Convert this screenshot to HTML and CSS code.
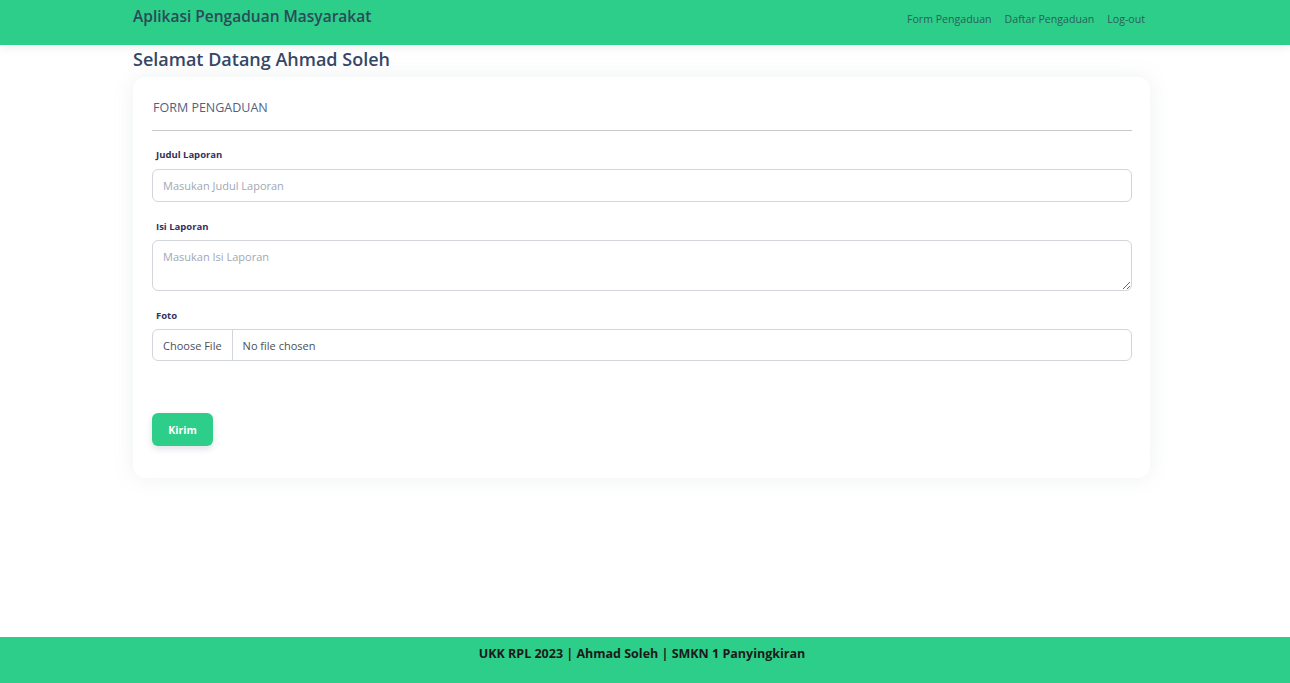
FILE: index.html
```html
<!DOCTYPE html>
<html lang="id">
<head>
<meta charset="utf-8">
<title>Aplikasi Pengaduan Masyarakat</title>
<link rel="stylesheet" href="styles.css">
</head>
<body>
<div class="page">
  <nav class="navbar">
    <div class="container nav-inner">
      <a class="brand" href="#">Aplikasi Pengaduan Masyarakat</a>
      <ul class="nav-links">
        <li><a href="#">Form Pengaduan</a></li>
        <li><a href="#">Daftar Pengaduan</a></li>
        <li><a href="#">Log-out</a></li>
      </ul>
    </div>
  </nav>
  <main class="container main">
    <h1 class="welcome">Selamat Datang Ahmad Soleh</h1>
    <section class="card">
      <div class="card-title">FORM PENGADUAN</div>
      <hr class="divider">
      <form class="form">
        <div class="group">
          <label class="label">Judul Laporan</label>
          <input class="control" type="text" placeholder="Masukan Judul Laporan">
        </div>
        <div class="group">
          <label class="label">Isi Laporan</label>
          <textarea class="control area" placeholder="Masukan Isi Laporan"></textarea>
        </div>
        <div class="group">
          <label class="label">Foto</label>
          <div class="control file">
            <span class="file-btn">Choose File</span>
            <span class="file-name">No file chosen</span>
          </div>
        </div>
        <button class="btn" type="button">Kirim</button>
      </form>
    </section>
  </main>
  <footer class="footer">UKK RPL 2023 | Ahmad Soleh | SMKN 1 Panyingkiran</footer>
</div>
</body>
</html>
```
FILE: styles.css
```css
* { box-sizing: border-box; }
html, body { margin: 0; padding: 0; }
body {
  font-family: "Open Sans", "Noto Sans", sans-serif;
  color: #32325d;
  background: #fff;
}
.page {
  min-height: 100vh;
  display: flex;
  flex-direction: column;
}
.container {
  width: 1017px;
  margin-left: 133px;
}
.navbar {
  background: #2dce89;
  height: 45px;
  box-shadow: 0 2px 10px rgba(0,0,0,0.08);
  position: relative;
  z-index: 2;
}
.nav-inner {
  display: flex;
  justify-content: space-between;
  align-items: flex-start;
  height: 100%;
}
.brand {
  font-size: 15.5px;
  font-weight: 600;
  color: #2b4a5a;
  text-decoration: none;
  line-height: 20px;
  margin-top: 6px;
}
.nav-links {
  list-style: none;
  display: flex;
  gap: 13px;
  margin: 11px 5px 0 0;
  padding: 0;
}
.nav-links a {
  font-size: 10.6px;
  color: #2a5f5a;
  text-decoration: none;
  line-height: 16px;
  display: block;
}
.main { flex: 1; }
.welcome {
  font-size: 18px;
  font-weight: 600;
  color: #344767;
  margin: 2px 0 0 0;
  line-height: 24px;
}
.card {
  margin-top: 6px;
  background: #fff;
  border-radius: 12px;
  box-shadow: 0 0 20px rgba(140,152,164,0.15);
  padding: 21px 18px 32px 19px;
}
.card-title {
  font-size: 12.5px;
  color: #525f7f;
  margin: 0 0 0 1px;
  line-height: 20px;
}
.divider {
  border: 0;
  border-top: 1px solid #c8c8cc;
  margin: 12px 0 0 0;
}
.form { display: flex; flex-direction: column; }
.group { display: flex; flex-direction: column; }
.label {
  font-size: 9.5px;
  font-weight: 700;
  color: #32325d;
  margin: 18px 0 6px 4px;
  line-height: 14px;
}
.group:first-child .label { margin: 17px 0 7px 4px; }
.control {
  width: 100%;
  height: 33px;
  border: 1px solid #d2d6da;
  border-radius: 6px;
  font-family: inherit;
  font-size: 11px;
  padding: 0 10px;
  color: #495057;
  background: #fff;
  outline: none;
}
.control::placeholder { color: #a0a8b4; }
.area {
  height: 51px;
  padding-top: 8px;
  resize: vertical;
  display: block;
}
.file {
  display: flex;
  align-items: stretch;
  padding: 0;
  height: 32px;
}
.file-btn {
  display: flex;
  align-items: center;
  padding: 0 10px;
  border-right: 1px solid #d2d6da;
  color: #495057;
}
.file-name {
  display: flex;
  align-items: center;
  padding: 0 10px;
  color: #495057;
}
.btn {
  margin-top: 52px;
  align-self: flex-start;
  width: 61px;
  height: 33px;
  background: #2dce89;
  color: #fff;
  border: 0;
  border-radius: 6px;
  font-family: inherit;
  font-weight: 700;
  font-size: 10.5px;
  box-shadow: 0 3px 6px rgba(50,50,93,0.15);
}
.footer {
  background: #2dce89;
  height: 46px;
  text-align: center;
  font-size: 12.5px;
  font-weight: 700;
  color: #1a1a1a;
  padding: 8px 6px 0 0;
  line-height: 18px;
}
```
